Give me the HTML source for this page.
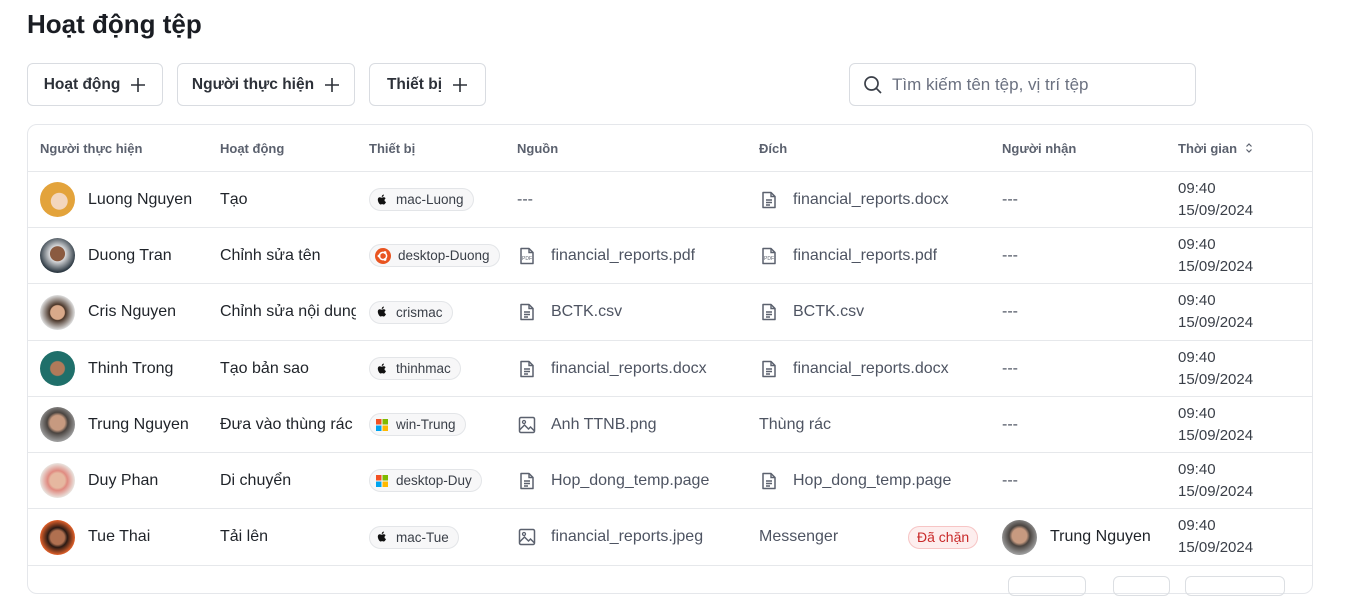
<!DOCTYPE html>
<html><head><meta charset="utf-8"><style>
*{box-sizing:border-box;margin:0;padding:0}
body{width:1346px;height:580px;overflow:hidden;background:#fff;font-family:"Liberation Sans","Noto Sans CJK SC",sans-serif;color:#1f2329;position:relative}
h1{position:absolute;left:27px;top:9px;font-size:26px;font-weight:700;color:#1a1d23}
.btn{position:absolute;top:63px;height:43px;border:1px solid #d9dce1;border-radius:6px;display:flex;align-items:center;justify-content:center;padding:0 10px;font-size:15.5px;font-weight:700;color:#2d3139;gap:10px;white-space:nowrap}
.btn svg{width:16px;height:16px;flex:none}
.search{position:absolute;left:849px;top:63px;width:347px;height:43px;border:1px solid #d9dce1;border-radius:6px;display:flex;align-items:center;padding-left:13px;gap:9px;font-size:17px;color:#6b7180}
.tbl{position:absolute;left:27px;top:124px;width:1286px;height:470px;border:1px solid #e5e7eb;border-radius:10px;overflow:hidden}
.row{position:absolute;left:0;width:1286px;border-bottom:1px solid #e6e8eb}
.c{position:absolute;top:0;height:100%;display:flex;align-items:center;font-size:16px;white-space:nowrap;overflow:hidden}
.hd .c{font-size:13px;font-weight:700;color:#5b616e}
.g{color:#4e5462}
.av{width:35px;height:35px;border-radius:50%;margin-right:13px;flex:none}
.chip{display:inline-flex;align-items:center;height:23px;border:1px solid #e3e5e8;background:#f7f7f8;border-radius:12px;padding:0 9px 0 5px;font-size:13.5px;color:#3a3f48;gap:7px}
.ic{width:20px;height:20px;margin-right:14px;flex:none}
.t{font-size:15px;line-height:22px;color:#3a3f48;display:block}
.bad{display:inline-flex;align-items:center;height:23px;padding:0 8px;border:1px solid #f7c5c5;background:#fdeeee;color:#c92a2a;border-radius:12px;font-size:14px}
</style></head><body>
<h1>Hoạt động tệp</h1>
<div class="btn" style="left:27px;width:136px">Hoạt động <svg viewBox="0 0 16 16"><path d="M8 1v14M1 8h14" stroke="#2d3139" stroke-width="1.6"/></svg></div>
<div class="btn" style="left:177px;width:178px">Người thực hiện <svg viewBox="0 0 16 16"><path d="M8 1v14M1 8h14" stroke="#2d3139" stroke-width="1.6"/></svg></div>
<div class="btn" style="left:369px;width:117px">Thiết bị <svg viewBox="0 0 16 16"><path d="M8 1v14M1 8h14" stroke="#2d3139" stroke-width="1.6"/></svg></div>
<div class="search"><svg width="20" height="20" viewBox="0 0 20 20"><circle cx="8.5" cy="8.5" r="6.5" fill="none" stroke="#3a3f48" stroke-width="1.7"/><path d="M13.3 13.3L18 18" stroke="#3a3f48" stroke-width="1.7"/></svg>Tìm kiếm tên tệp, vị trí tệp</div>

<svg width="0" height="0" style="position:absolute"><defs>
<symbol id="doc" viewBox="0 0 20 20"><path d="M4 2.5h8l4 4v11h-12z" fill="none" stroke="#5b616e" stroke-width="1.5" stroke-linejoin="round"/><path d="M12 2.5v4h4M7 10h6M7 12.5h6M7 15h4" stroke="#5b616e" stroke-width="1.4" fill="none"/></symbol>
<symbol id="pdf" viewBox="0 0 20 20"><path d="M4 2.5h8l4 4v11h-12z" fill="none" stroke="#5b616e" stroke-width="1.5" stroke-linejoin="round"/><path d="M12 2.5v4h4" stroke="#5b616e" stroke-width="1.4" fill="none"/><text x="10" y="14" font-size="5" text-anchor="middle" fill="#5b616e" font-family="Liberation Sans">PDF</text></symbol>
<symbol id="img" viewBox="0 0 20 20"><rect x="2.5" y="2.5" width="15" height="15" rx="1.5" fill="none" stroke="#5b616e" stroke-width="1.5"/><circle cx="7" cy="7" r="1.5" fill="none" stroke="#5b616e" stroke-width="1.3"/><path d="M2.5 15l5-5 4 4 2-2 4 4" fill="none" stroke="#5b616e" stroke-width="1.5"/></symbol>
<symbol id="apple" viewBox="0 0 14 14"><path d="M9.5 7.4c0-1.4 1.1-2 1.2-2.1-.7-1-1.7-1.1-2-1.1-.9-.1-1.700.5-2.100.5-.5 0-1.1-.5-1.8-.5C3.9 4.2 2.8 4.9 2.8 6.5c0 2.1 1.5 5 2.8 5 .6 0 .9-.4 1.6-.4s.9.4 1.6.4c1 0 1.900-1.700 2.200-2.500-.2-.1-1.500-.6-1.500-1.600zM8.3 3.3c.4-.5.6-1.1.6-1.8-.6 0-1.2.4-1.6.8-.3.4-.6 1-.5 1.7.6 0 1.2-.3 1.5-.7z" fill="#111"/></symbol>
<symbol id="ubu" viewBox="0 0 16 16"><circle cx="8" cy="8" r="8" fill="#e95420"/><circle cx="8" cy="8" r="3.6" fill="none" stroke="#fff" stroke-width="1.5"/><circle cx="4" cy="8" r="1.4" fill="#fff"/><circle cx="10" cy="4.5" r="1.4" fill="#fff"/><circle cx="10" cy="11.5" r="1.4" fill="#fff"/></symbol>
<symbol id="win" viewBox="0 0 14 14"><rect x="1" y="1" width="5.5" height="5.5" fill="#f25022"/><rect x="7.5" y="1" width="5.5" height="5.5" fill="#7fba00"/><rect x="1" y="7.5" width="5.5" height="5.5" fill="#00a4ef"/><rect x="7.5" y="7.5" width="5.5" height="5.5" fill="#ffb900"/></symbol>
</defs></svg>

<div class="tbl">
<div class="row hd" style="top:0;height:47px">
<div class="c" style="left:12px">Người thực hiện</div><div class="c" style="left:192px">Hoạt động</div><div class="c" style="left:341px">Thiết bị</div><div class="c" style="left:489px">Nguồn</div><div class="c" style="left:731px">Đích</div><div class="c" style="left:974px">Người nhận</div><div class="c" style="left:1150px">Thời gian <svg width="12" height="12" viewBox="0 0 12 12" style="margin-left:6px"><path d="M3.5 4.5L6 2l2.5 2.5M3.5 7.5L6 10l2.5-2.5" fill="none" stroke="#5b616e" stroke-width="1.2"/></svg></div>
</div>

<div class="row" style="top:47px;height:56px">
<div class="c" style="left:12px"><div class="av" style="background:radial-gradient(circle at 55% 55%,#f3d6bd 30%,#e3a33b 32%)"></div>Luong Nguyen</div>
<div class="c" style="left:192px">Tạo</div>
<div class="c" style="left:341px"><span class="chip"><svg width="14" height="14"><use href="#apple"/></svg>mac-Luong</span></div>
<div class="c g" style="left:489px">---</div>
<div class="c g" style="left:731px"><svg class="ic"><use href="#doc"/></svg>financial_reports.docx</div>
<div class="c g" style="left:974px">---</div>
<div class="c" style="left:1150px"><div><span class="t">09:40</span><span class="t">15/09/2024</span></div></div>
</div>

<div class="row" style="top:103px;height:56px">
<div class="c" style="left:12px"><div class="av" style="background:radial-gradient(circle at 50% 45%,#8a5a40 28%,#d8d9db 30%,#2e3a44 70%)"></div>Duong Tran</div>
<div class="c" style="left:192px">Chỉnh sửa tên</div>
<div class="c" style="left:341px"><span class="chip"><svg width="16" height="16"><use href="#ubu"/></svg>desktop-Duong</span></div>
<div class="c g" style="left:489px"><svg class="ic"><use href="#pdf"/></svg>financial_reports.pdf</div>
<div class="c g" style="left:731px"><svg class="ic"><use href="#pdf"/></svg>financial_reports.pdf</div>
<div class="c g" style="left:974px">---</div>
<div class="c" style="left:1150px"><div><span class="t">09:40</span><span class="t">15/09/2024</span></div></div>
</div>

<div class="row" style="top:159px;height:57px">
<div class="c" style="left:12px"><div class="av" style="background:radial-gradient(circle at 50% 50%,#d9a98a 28%,#4a3528 32%,#ddd 70%)"></div>Cris Nguyen</div>
<div class="c" style="left:192px;width:136px">Chỉnh sửa nội dung</div>
<div class="c" style="left:341px"><span class="chip"><svg width="14" height="14"><use href="#apple"/></svg>crismac</span></div>
<div class="c g" style="left:489px"><svg class="ic"><use href="#doc"/></svg>BCTK.csv</div>
<div class="c g" style="left:731px"><svg class="ic"><use href="#doc"/></svg>BCTK.csv</div>
<div class="c g" style="left:974px">---</div>
<div class="c" style="left:1150px"><div><span class="t">09:40</span><span class="t">15/09/2024</span></div></div>
</div>

<div class="row" style="top:216px;height:56px">
<div class="c" style="left:12px"><div class="av" style="background:radial-gradient(circle at 50% 50%,#b07a5a 28%,#1f6f6a 32%)"></div>Thinh Trong</div>
<div class="c" style="left:192px">Tạo bản sao</div>
<div class="c" style="left:341px"><span class="chip"><svg width="14" height="14"><use href="#apple"/></svg>thinhmac</span></div>
<div class="c g" style="left:489px"><svg class="ic"><use href="#doc"/></svg>financial_reports.docx</div>
<div class="c g" style="left:731px"><svg class="ic"><use href="#doc"/></svg>financial_reports.docx</div>
<div class="c g" style="left:974px">---</div>
<div class="c" style="left:1150px"><div><span class="t">09:40</span><span class="t">15/09/2024</span></div></div>
</div>

<div class="row" style="top:272px;height:56px">
<div class="c" style="left:12px"><div class="av" style="background:radial-gradient(circle at 50% 45%,#c79a80 28%,#4a4440 40%,#9a9a9a 70%)"></div>Trung Nguyen</div>
<div class="c" style="left:192px">Đưa vào thùng rác</div>
<div class="c" style="left:341px"><span class="chip"><svg width="14" height="14"><use href="#win"/></svg>win-Trung</span></div>
<div class="c g" style="left:489px"><svg class="ic"><use href="#img"/></svg>Anh TTNB.png</div>
<div class="c g" style="left:731px">Thùng rác</div>
<div class="c g" style="left:974px">---</div>
<div class="c" style="left:1150px"><div><span class="t">09:40</span><span class="t">15/09/2024</span></div></div>
</div>

<div class="row" style="top:328px;height:56px">
<div class="c" style="left:12px"><div class="av" style="background:radial-gradient(circle at 50% 50%,#e6b8a0 30%,#e08a80 40%,#e9e4df 70%)"></div>Duy Phan</div>
<div class="c" style="left:192px">Di chuyển</div>
<div class="c" style="left:341px"><span class="chip"><svg width="14" height="14"><use href="#win"/></svg>desktop-Duy</span></div>
<div class="c g" style="left:489px"><svg class="ic"><use href="#doc"/></svg>Hop_dong_temp.page</div>
<div class="c g" style="left:731px"><svg class="ic"><use href="#doc"/></svg>Hop_dong_temp.page</div>
<div class="c g" style="left:974px">---</div>
<div class="c" style="left:1150px"><div><span class="t">09:40</span><span class="t">15/09/2024</span></div></div>
</div>

<div class="row" style="top:384px;height:57px">
<div class="c" style="left:12px"><div class="av" style="background:radial-gradient(circle at 50% 50%,#b07050 28%,#2a1a14 40%,#e0602a 70%)"></div>Tue Thai</div>
<div class="c" style="left:192px">Tải lên</div>
<div class="c" style="left:341px"><span class="chip"><svg width="14" height="14"><use href="#apple"/></svg>mac-Tue</span></div>
<div class="c g" style="left:489px"><svg class="ic"><use href="#img"/></svg>financial_reports.jpeg</div>
<div class="c g" style="left:731px">Messenger</div>
<div class="c" style="left:880px"><span class="bad">Đã chặn</span></div>
<div class="c" style="left:974px"><div class="av" style="background:radial-gradient(circle at 50% 45%,#c79a80 28%,#4a4440 40%,#9a9a9a 70%)"></div>Trung Nguyen</div>
<div class="c" style="left:1150px"><div><span class="t">09:40</span><span class="t">15/09/2024</span></div></div>
</div>
</div>
<div style="position:absolute;left:1008px;top:576px;width:78px;height:20px;border:1px solid #dcdfe3;border-radius:6px"></div>
<div style="position:absolute;left:1113px;top:576px;width:57px;height:20px;border:1px solid #dcdfe3;border-radius:6px"></div>
<div style="position:absolute;left:1185px;top:576px;width:100px;height:20px;border:1px solid #dcdfe3;border-radius:6px"></div>
</body></html>
